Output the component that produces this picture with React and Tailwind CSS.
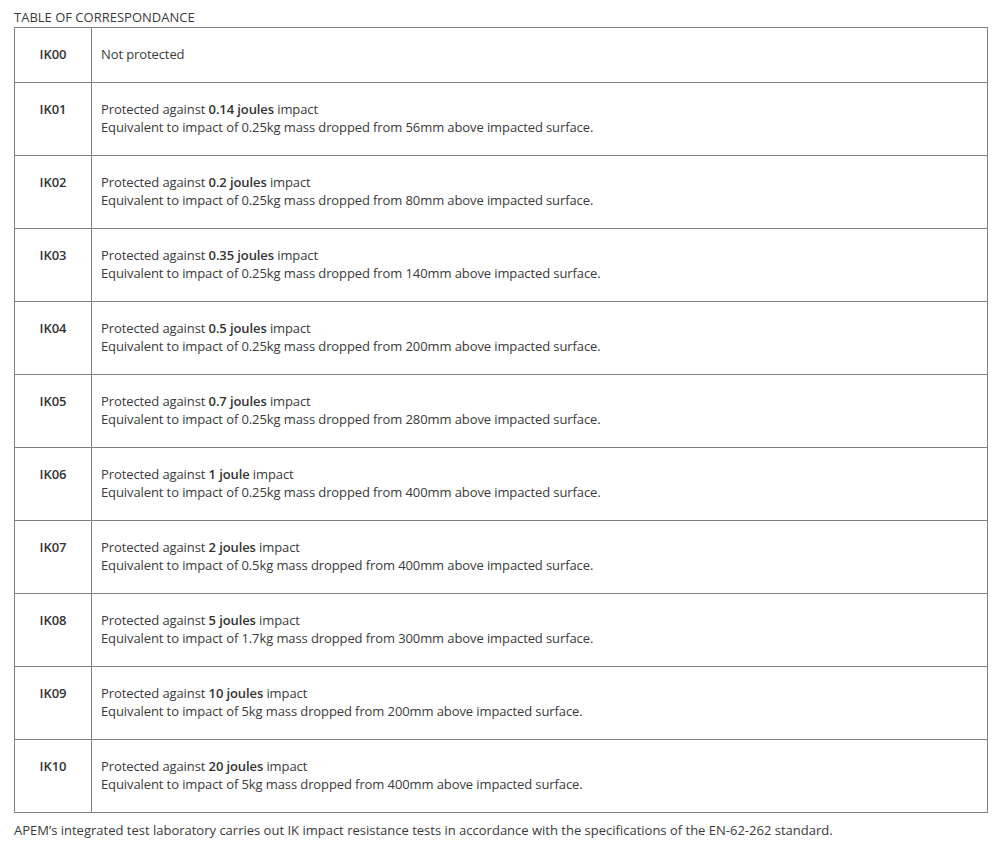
const rows = [
  { code: 'IK00', value: null },
  { code: 'IK01', value: '0.14 joules', mass: '0.25kg', height: '56mm' },
  { code: 'IK02', value: '0.2 joules', mass: '0.25kg', height: '80mm' },
  { code: 'IK03', value: '0.35 joules', mass: '0.25kg', height: '140mm' },
  { code: 'IK04', value: '0.5 joules', mass: '0.25kg', height: '200mm' },
  { code: 'IK05', value: '0.7 joules', mass: '0.25kg', height: '280mm' },
  { code: 'IK06', value: '1 joule', mass: '0.25kg', height: '400mm' },
  { code: 'IK07', value: '2 joules', mass: '0.5kg', height: '400mm' },
  { code: 'IK08', value: '5 joules', mass: '1.7kg', height: '300mm' },
  { code: 'IK09', value: '10 joules', mass: '5kg', height: '200mm' },
  { code: 'IK10', value: '20 joules', mass: '5kg', height: '400mm' },
];

export default function App() {
  return (
    <div className="bg-white px-[14px] pt-[8px] text-[13px] leading-[18px] text-[#3a3a3a] [font-family:'Open_Sans',sans-serif]">
      <p className="mb-px">TABLE OF CORRESPONDANCE</p>
      <table className="w-[974px] border-collapse">
        <tbody>
          {rows.map((r) => (
            <tr key={r.code}>
              <td className="w-[77px] border border-[#808080] pt-[17px] pb-[19px] text-center align-top font-semibold text-[#333]">
                {r.code}
              </td>
              <td className="border border-[#808080] pt-[17px] pb-[19px] pl-[9px] align-top tracking-[-0.1px]">
                {r.value ? (
                  <>
                    <div>
                      Protected against <span className="font-semibold text-[#333]">{r.value}</span> impact
                    </div>
                    <div>
                      Equivalent to impact of {r.mass} mass dropped from {r.height} above impacted surface.
                    </div>
                  </>
                ) : (
                  'Not protected'
                )}
              </td>
            </tr>
          ))}
        </tbody>
      </table>
      <p className="mt-[8px]">
        APEM’s integrated test laboratory carries out IK impact resistance tests in accordance with the specifications of the EN-62-262 standard.
      </p>
    </div>
  );
}
